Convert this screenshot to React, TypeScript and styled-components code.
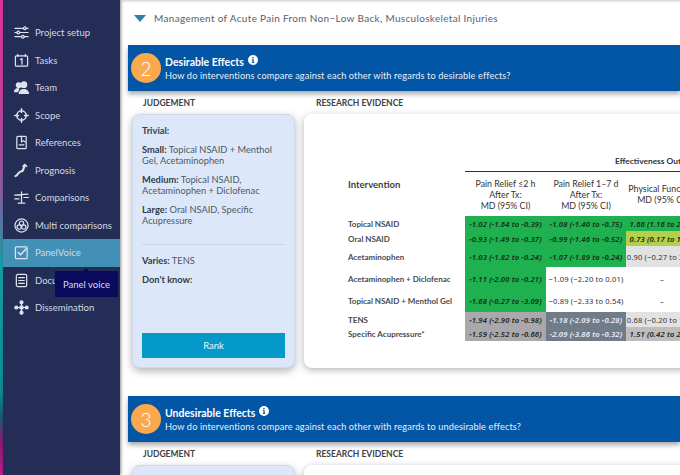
import React from "react";
import styled, { createGlobalStyle } from "styled-components";

const Global = createGlobalStyle`
  html, body { margin: 0; padding: 0; background: #fff; }
  body { font-family: "Lato", "Noto Sans", sans-serif; }
  * { box-sizing: border-box; }
`;

const Page = styled.div`
  width: 680px; height: 475px; overflow: hidden; display: flex; background: #fff; position: relative;
`;
const Strip = styled.div`
  width: 3px; flex: none;
  background: linear-gradient(180deg, #e0359a 0%, #c2409f 22%, #8a5aa5 40%, #14a0a8 56%, #0f8d96 82%, #1d5a72 88%, #8a1a78 93%, #c01a8a 100%);
`;
const Sidebar = styled.nav`
  width: 117px; flex: none; background: #232d55; padding-top: 19px; display: flex; flex-direction: column;
  box-shadow: 1px 0 3px rgba(0,0,0,.45); position: relative; z-index: 2;
`;
const Item = styled.div<{ $active?: boolean }>`
  height: 27.5px; flex: none; display: flex; align-items: center; gap: 6px; padding-left: 11px;
  color: #d5d9e6; font-size: 9.5px; background: ${p => (p.$active ? "#4390b7" : "transparent")};
  white-space: nowrap; position: relative;
  svg { flex: none; width: 15px; height: 15px; }
`;
const Tooltip = styled.div`
  position: absolute; left: 52px; top: 32px; width: 63px; height: 26px; background: #0a0a5c; color: #d8dcec;
  font-size: 9.5px; display: flex; align-items: center; justify-content: center; z-index: 5;
  &::before {
    content: ""; position: absolute; left: 28px; top: -3px; border-left: 3px solid transparent;
    border-right: 3px solid transparent; border-bottom: 3px solid #0a0a5c;
  }
`;
const Main = styled.main`
  flex: 1; min-width: 0; padding: 0 0 0 8px; display: flex; flex-direction: column; overflow: hidden;
  box-shadow: inset 0 3px 3px -2px rgba(0,0,0,.2);
`;
const Heading = styled.div`
  height: 45px; flex: none; padding: 11px 0 0 6px; display: flex; align-items: flex-start; gap: 8px;
  color: #5a6068; font-size: 10px; letter-spacing: .32px; line-height: 14px; white-space: nowrap;
`;
const Caret = styled.span`
  width: 0; height: 0; margin-top: 4px; border-left: 6px solid transparent; border-right: 6px solid transparent;
  border-top: 7px solid #2d7ea8;
`;
const Banner = styled.div`
  height: 46px; flex: none; background: #0355a5; display: flex; align-items: center; padding-left: 3px; gap: 4px;
  box-shadow: 0 3px 5px rgba(0,0,0,.35); color: #fff; white-space: nowrap;
`;
const Badge = styled.div`
  width: 30px; height: 30px; border-radius: 50%; background: #fba94f; color: #fff; font-size: 19px; font-weight: 300;
  display: flex; align-items: center; justify-content: center; flex: none;
`;
const BannerText = styled.div` display: flex; flex-direction: column; gap: 2px; `;
const BannerTitle = styled.div`
  font-size: 10.5px; font-weight: 700; display: flex; align-items: center; gap: 4px; height: 13px;
  svg { margin-top: -3px; }
`;
const BannerSub = styled.div` font-size: 9.2px; color: #e8f0f8; letter-spacing: .12px; `;
const Labels = styled.div`
  display: grid; grid-template-columns: 173px 1fr; padding: 7px 0 0 15px; height: 23px; flex: none;
  color: #3c4248; font-size: 8.5px; font-weight: 700;
`;
const Columns = styled.div` display: flex; gap: 9px; padding-left: 4px; flex: none; `;
const JudgeCard = styled.div`
  width: 163px; height: 254px; flex: none; background: #dce8f9; border-radius: 8px; border: 1px solid #cfd9ea;
  box-shadow: 0 3px 8px rgba(0,0,0,.3); padding: 10px 9px 9px; display: flex; flex-direction: column;
  color: #4f5965; font-size: 9.3px; line-height: 11px;
`;
const Para = styled.p` margin: 0 0 8px; b { color: #333c49; font-weight: 700; } `;
const Rule = styled.hr` border: 0; border-top: 1px solid #c9d5e6; margin: 10px 0 10px; width: 100%; `;
const RankButton = styled.div`
  margin-top: auto; height: 25px; background: #0599c9; color: #e6f5fb; font-size: 9.5px;
  display: flex; align-items: center; justify-content: center; flex: none;
`;
const EvidenceCard = styled.div`
  width: 400px; height: 254px; flex: none; background: #fff; border-radius: 8px 0 0 8px;
  box-shadow: 0 2px 7px rgba(0,0,0,.3); padding: 41px 0 0 44px; overflow: hidden;
`;
const Table = styled.div`
  display: grid; grid-template-columns: 117px 81px 80px 72px 83px 74px;
  grid-template-rows: 17px 44px 15px 15px 21px 23px 22px 15px 14px;
  width: 507px; font-family: "Noto Sans", sans-serif;
`;
const Span = styled.div`
  grid-column: 2 / 7; border-bottom: 1px solid #333; font-size: 8.4px; font-weight: 700; color: #333; text-align: center;
  white-space: nowrap; line-height: 13px; font-family: "Lato", sans-serif;
`;
const Blank = styled.div` grid-column: 1; `;
const InterHead = styled.div`
  grid-column: 1; display: flex; align-items: center; padding-bottom: 20px; font-size: 9.5px; font-weight: 700; color: #3a3f44;
  font-family: "Lato", sans-serif;
`;
const ColHead = styled.div`
  display: flex; align-items: center; justify-content: center; text-align: center; font-size: 8.8px; line-height: 11px;
  color: #333; font-family: "Lato", sans-serif; white-space: nowrap;
`;
const RowName = styled.div`
  grid-column: 1; display: flex; align-items: center; font-size: 8px; font-weight: 700; color: #464b51; white-space: nowrap;
  font-family: "Lato", sans-serif;
`;
const tones: Record<string, [string, string]> = {
  green: ["#1fb14f", "#142a18"],
  lime: ["#b4cf4a", "#1c2410"],
  light: ["#e2e2e2", "#333"],
  none: ["#fff", "#333"],
  gray: ["#a9a9ab", "#222"],
  slate: ["#707c88", "#eef"],
  mid: ["#bdbdbd", "#222"],
};
const Cell = styled.div<{ $t: string; $i?: boolean }>`
  display: flex; align-items: center; justify-content: center; white-space: nowrap; overflow: hidden;
  font-size: 7.6px; letter-spacing: .15px; background: ${p => tones[p.$t][0]}; color: ${p => tones[p.$t][1]};
  font-style: ${p => (p.$i ? "italic" : "normal")}; font-weight: ${p => (p.$i ? 600 : 400)};
`;

const S = { fill: "none", stroke: "#dfe3ee", strokeWidth: 1.3, strokeLinecap: "round" as const, strokeLinejoin: "round" as const };
const Icon = ({ children }: { children: React.ReactNode }) => <svg viewBox="0 0 16 16" {...S}>{children}</svg>;

const icons: Record<string, React.ReactNode> = {
  setup: <Icon><path d="M1 3.5h9M13 3.5h2M1 8h2M6 8h9M1 12.5h7M11 12.5h4" /><circle cx="11.5" cy="3.5" r="1.4" /><circle cx="4.5" cy="8" r="1.4" /><circle cx="9.5" cy="12.5" r="1.4" /></Icon>,
  tasks: <Icon><rect x="1.5" y="3" width="13" height="11" rx="1" /><path d="M4 1.5v2M12 1.5v2M7 7l1.5-1v6" /></Icon>,
  team: <Icon><circle cx="10.5" cy="5" r="3" fill="#dfe3ee" /><path d="M5 15c0-4 2.500-5.500 5.500-5.500S16 11 16 15z" fill="#dfe3ee" stroke="none" /><circle cx="5" cy="5.500" r="2.500" fill="#dfe3ee" /><path d="M0 13c0-3 2-4.500 4.500-4.500L6 9.500 4 13z" fill="#dfe3ee" stroke="none" /></Icon>,
  scope: <Icon><circle cx="8" cy="8" r="5" strokeWidth="1.6" /><path d="M8 .8v4M8 11.200v4M.8 8h4M11.200 8h4" strokeWidth="1.6" /></Icon>,
  refs: <Icon><rect x="3" y="1.500" width="10" height="13" rx="1" /><path d="M8 1.500v6l2 -1.500 2 1.500M5.500 10.500h5" /></Icon>,
  prog: <Icon><path d="M1.500 14c3-1 3-5 6-5s2-3 4-6" strokeWidth="2.200" /><path d="M9.500 3.500l2-2 2 2" strokeWidth="1.600" /></Icon>,
  comp: <Icon><path d="M8 2v11M4.500 14h7M.8 5.500l14-1" /><path d="M.8 9.500h4.500M10.500 8h5" /></Icon>,
  multi: <Icon><circle cx="8" cy="8" r="7" /><circle cx="8" cy="5.500" r="2.300" /><circle cx="5.500" cy="9.700" r="2.300" /><circle cx="10.500" cy="9.700" r="2.300" /></Icon>,
  panel: <Icon><rect x="1.500" y="2" width="12.500" height="12.500" rx="1" /><path d="M4.500 8l2.500 2.500L13 4" strokeWidth="1.600" /></Icon>,
  docs: <Icon><rect x="2.500" y="1.500" width="11" height="13" rx="1.500" /><path d="M5 5h6M5 8h6M5 11h6" /></Icon>,
  diss: <Icon><path d="M8 3v10M3 8h10" /><circle cx="8" cy="2.500" r="1.600" fill="#dfe3ee" /><circle cx="8" cy="13.500" r="1.600" fill="#dfe3ee" /><circle cx="2.500" cy="8" r="1.600" fill="#dfe3ee" /><circle cx="13.500" cy="8" r="1.600" fill="#dfe3ee" /><circle cx="8" cy="8" r="1.800" fill="#dfe3ee" /></Icon>,
};

const nav: [string, string][] = [
  ["setup", "Project setup"], ["tasks", "Tasks"], ["team", "Team"], ["scope", "Scope"], ["refs", "References"],
  ["prog", "Prognosis"], ["comp", "Comparisons"], ["multi", "Multi comparisons"], ["panel", "PanelVoice"],
  ["docs", "Document"], ["diss", "Dissemination"],
];

const InfoIcon = () => (
  <svg width="10" height="10" viewBox="0 0 10 10"><circle cx="5" cy="5" r="5" fill="#fff" /><path d="M4.200 2h1.500v1.300H4.200zM3.800 4.200h1.900v3h.7v.9H3.700v-.9h.7V5.100h-.6z" fill="#0355a5" /></svg>
);

const SectionBanner = ({ n, title, sub }: { n: number; title: string; sub: string }) => (
  <Banner>
    <Badge>{n}</Badge>
    <BannerText>
      <BannerTitle>{title}<InfoIcon /></BannerTitle>
      <BannerSub>{sub}</BannerSub>
    </BannerText>
  </Banner>
);

const Spacer = styled.div<{ $h: number }>` height: ${p => p.$h}px; flex: none; `;

export default function App() {
  return (
    <Page>
      <Global />
      <Strip />
      <Sidebar>
        {nav.map(([k, label]) => (
          <Item key={k} $active={k === "panel"}>
            {icons[k]}{label}
            {k === "panel" && <Tooltip>Panel voice</Tooltip>}
          </Item>
        ))}
      </Sidebar>
      <Main>
        <Heading><Caret />Management of Acute Pain From Non−Low Back, Musculoskeletal Injuries</Heading>
        <SectionBanner n={2} title="Desirable Effects" sub="How do interventions compare against each other with regards to desirable effects?" />
        <Labels><span>JUDGEMENT</span><span>RESEARCH EVIDENCE</span></Labels>
        <Columns>
          <JudgeCard>
            <Para><b>Trivial:</b></Para>
            <Para><b>Small:</b> Topical NSAID + Menthol Gel, Acetaminophen</Para>
            <Para><b>Medium:</b> Topical NSAID, Acetaminophen + Diclofenac</Para>
            <Para><b>Large:</b> Oral NSAID, Specific Acupressure</Para>
            <Rule />
            <Para><b>Varies:</b> TENS</Para>
            <Para><b>Don't know:</b></Para>
            <RankButton>Rank</RankButton>
          </JudgeCard>
          <EvidenceCard>
            <Table>
              <Blank />
              <Span>Effectiveness Outcomes</Span>
              <InterHead>Intervention</InterHead>
              <ColHead>Pain Relief ≤2 h<br />After Tx:<br />MD (95% CI)</ColHead>
              <ColHead>Pain Relief 1–7 d<br />After Tx:<br />MD (95% CI)</ColHead>
              <ColHead>Physical Function<br />MD (95% CI)</ColHead>

              <RowName>Topical NSAID</RowName>
              <Cell $t="green" $i>−1.02 (−1.64 to −0.39)</Cell>
              <Cell $t="green" $i>−1.08 (−1.40 to −0.75)</Cell>
              <Cell $t="green" $i>1.66 (1.16 to 2.16)</Cell>

              <RowName>Oral NSAID</RowName>
              <Cell $t="green" $i>−0.93 (−1.49 to −0.37)</Cell>
              <Cell $t="green" $i>−0.99 (−1.46 to −0.52)</Cell>
              <Cell $t="lime" $i>0.73 (0.17 to 1.29)</Cell>

              <RowName>Acetaminophen</RowName>
              <Cell $t="green" $i>−1.03 (−1.82 to −0.24)</Cell>
              <Cell $t="green" $i>−1.07 (−1.89 to −0.24)</Cell>
              <Cell $t="light">0.90 (−0.27 to 2.07)</Cell>

              <RowName>Acetaminophen + Diclofenac</RowName>
              <Cell $t="green" $i>−1.11 (−2.00 to −0.21)</Cell>
              <Cell $t="none">−1.09 (−2.20 to 0.01)</Cell>
              <Cell $t="none">–</Cell>

              <RowName>Topical NSAID + Menthol Gel</RowName>
              <Cell $t="green" $i>−1.68 (−0.27 to −3.09)</Cell>
              <Cell $t="none">−0.89 (−2.33 to 0.54)</Cell>
              <Cell $t="none">–</Cell>

              <RowName>TENS</RowName>
              <Cell $t="gray" $i>−1.94 (−2.90 to −0.98)</Cell>
              <Cell $t="slate" $i>−1.18 (−2.09 to −0.28)</Cell>
              <Cell $t="light">0.68 (−0.20 to 1.56)</Cell>

              <RowName>Specific Acupressure*</RowName>
              <Cell $t="gray" $i>−1.59 (−2.52 to −0.66)</Cell>
              <Cell $t="slate" $i>−2.09 (−3.86 to −0.32)</Cell>
              <Cell $t="mid" $i>1.51 (0.42 to 2.60)</Cell>
            </Table>
          </EvidenceCard>
        </Columns>
        <Spacer $h={28} />
        <SectionBanner n={3} title="Undesirable Effects" sub="How do interventions compare against each other with regards to undesirable effects?" />
        <Labels><span>JUDGEMENT</span><span>RESEARCH EVIDENCE</span></Labels>
        <Columns>
          <JudgeCard />
          <EvidenceCard />
        </Columns>
      </Main>
    </Page>
  );
}
